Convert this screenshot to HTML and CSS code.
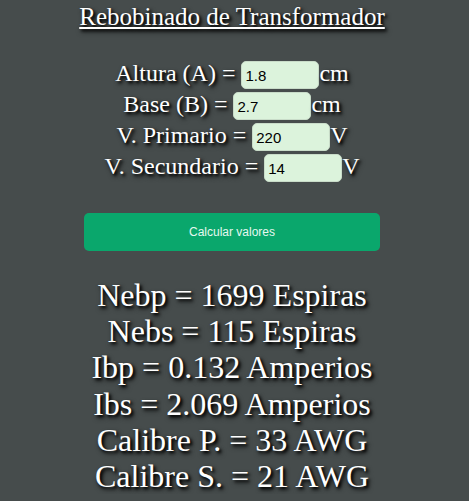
FILE: index.html
```html
<!DOCTYPE html>
<html lang="es">
<head>
<meta charset="utf-8">
<title>Rebobinado de Transformador</title>
<link rel="stylesheet" href="styles.css">
</head>
<body>
<div class="page">
  <h1 class="title">Rebobinado de Transformador</h1>
  <div class="form">
    <div class="row">Altura (A) = <input class="field" type="text" value="1.8">cm</div>
    <div class="row">Base (B) = <input class="field" type="text" value="2.7">cm</div>
    <div class="row">V. Primario = <input class="field" type="text" value="220">V</div>
    <div class="row">V. Secundario = <input class="field" type="text" value="14">V</div>
  </div>
  <button class="calc" type="button">Calcular valores</button>
  <div class="results">
    <div class="res">Nebp = 1699 Espiras</div>
    <div class="res">Nebs = 115 Espiras</div>
    <div class="res">Ibp = 0.132 Amperios</div>
    <div class="res">Ibs = 2.069 Amperios</div>
    <div class="res">Calibre P. = 33 AWG</div>
    <div class="res">Calibre S. = 21 AWG</div>
  </div>
</div>
</body>
</html>
```
FILE: styles.css
```css
html, body {
  margin: 0;
  padding: 0;
  background: #464c4c;
}
body {
  font-family: "Liberation Serif", "Times New Roman", serif;
  color: #ffffff;
}
.page {
  width: 464px;
  text-align: center;
  text-shadow: 2px 2px 3px #000000, 2px 3px 5px rgba(0, 0, 0, 0.7);
}
.title {
  font-size: 25px;
  font-weight: normal;
  line-height: 28px;
  margin: 3px 0 0;
  text-decoration: underline;
}
.form {
  margin-top: 27px;
}
.row {
  font-size: 24px;
  line-height: 31px;
  height: 31px;
  white-space: nowrap;
}
.field {
  box-sizing: border-box;
  width: 78px;
  height: 28px;
  padding: 0 3px;
  margin: 0;
  border: 1px solid #c9dcc9;
  border-radius: 5px;
  background: #dcf3dc;
  color: #000000;
  font-family: "Liberation Sans", Arial, sans-serif;
  font-size: 15px;
  vertical-align: middle;
  text-shadow: none;
}
.calc {
  display: block;
  width: 296px;
  height: 38px;
  margin: 31px 0 0 84px;
  border: none;
  border-radius: 5px;
  background: #0aa76c;
  color: #e6f8f0;
  font-family: "Liberation Sans", Arial, sans-serif;
  font-size: 12px;
  text-shadow: none;
}
.results {
  margin-top: 26px;
}
.res {
  font-size: 32px;
  line-height: 36.2px;
}
```
